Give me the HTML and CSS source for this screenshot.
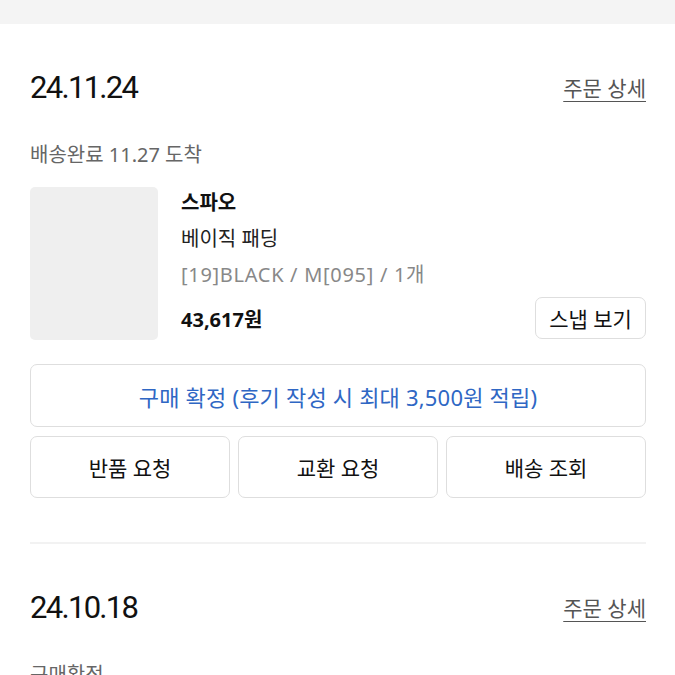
FILE: index.html
```html
<!DOCTYPE html>
<html lang="ko">
<head>
<meta charset="utf-8">
<link rel="stylesheet" href="styles.css">
</head>
<body>
<div class="topband"></div>
<main class="orders">
  <section class="order">
    <div class="order-head">
      <span class="date">24.11.24</span>
      <a class="detail">주문 상세</a>
    </div>
    <div class="status">배송완료 11.27 도착</div>
    <div class="product">
      <div class="thumb"></div>
      <div class="info">
        <div class="brand">스파오</div>
        <div class="name">베이직 패딩</div>
        <div class="option">[19]BLACK / M[095] / 1개</div>
        <div class="price-row">
          <span class="price">43,617원</span>
          <button class="btn snap">스냅 보기</button>
        </div>
      </div>
    </div>
    <button class="btn confirm">구매 확정 (후기 작성 시 최대 3,500원 적립)</button>
    <div class="actions">
      <button class="btn action">반품 요청</button>
      <button class="btn action">교환 요청</button>
      <button class="btn action">배송 조회</button>
    </div>
  </section>
  <section class="order">
    <div class="order-head">
      <span class="date">24.10.18</span>
      <a class="detail">주문 상세</a>
    </div>
    <div class="status">구매확정</div>
  </section>
</main>
</body>
</html>
```
FILE: styles.css
```css
html, body {
  margin: 0;
  padding: 0;
  background: #fff;
  font-family: "Noto Sans", "Noto Sans CJK KR", sans-serif;
  color: #111;
  overflow: hidden;
}
.topband {
  height: 24px;
  background: #f4f4f4;
}
.orders {
  padding: 0 29px 0 30px;
}
.order {
  padding: 45px 0 44px;
  border-bottom: 2px solid #f2f2f2;
}
.order-head {
  display: flex;
  justify-content: space-between;
  align-items: center;
  height: 36px;
}
.date {
  font-family: Roboto, "Noto Sans CJK KR", sans-serif;
  font-size: 31px;
  letter-spacing: -1.7px;
  color: #111;
}
.detail {
  font-size: 21px;
  color: #555;
  text-decoration: underline;
  text-underline-offset: 5px;
  text-decoration-thickness: 1px;
}
.status {
  margin-top: 36px;
  font-size: 20px;
  line-height: 28px;
  color: #666;
}
.product {
  display: flex;
  gap: 23px;
  margin-top: 18px;
}
.thumb {
  width: 128px;
  height: 153px;
  border-radius: 5px;
  background: #efefef;
  flex: none;
}
.info {
  flex: 1;
  margin-top: -2px;
}
.brand, .name, .option {
  font-size: 20px;
  line-height: 36px;
}
.brand { font-weight: 700; }
.name { color: #222; }
.option {
  color: #888;
  letter-spacing: 0.7px;
}
.price-row {
  display: flex;
  justify-content: space-between;
  align-items: center;
  margin-top: 4px;
}
.price {
  font-size: 20px;
  font-weight: 700;
  letter-spacing: 0;
}
.btn {
  font-family: "Noto Sans", "Noto Sans CJK KR", sans-serif;
  background: #fff;
  border: 1px solid #dedede;
  border-radius: 7px;
  color: #111;
  font-size: 21px;
  padding: 0;
  cursor: pointer;
}
.snap {
  width: 111px;
  height: 42px;
}
.confirm {
  display: block;
  width: 100%;
  height: 63px;
  margin-top: 24px;
  color: #2f67c4;
  font-size: 22px;
  letter-spacing: 0.2px;
}
.actions {
  display: grid;
  grid-template-columns: 1fr 1fr 1fr;
  gap: 8px;
  margin-top: 9px;
}
.action {
  height: 62px;
}
.order + .order {
  border-bottom: none;
  padding-top: 45px;
}
```
